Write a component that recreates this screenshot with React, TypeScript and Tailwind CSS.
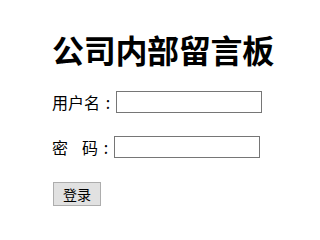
export default function App() {
  return (
    <div
      className="min-h-screen bg-white text-black pl-[52px] pt-[33px]"
      style={{ fontFamily: '"Noto Sans CJK SC", "Noto Sans", sans-serif' }}
    >
      <h1 className="text-[32px] leading-[32px] font-bold tracking-[-0.3px]">公司内部留言板</h1>

      <form className="mt-[26px] flex flex-col items-start" onSubmit={(e) => e.preventDefault()}>
        <label className="flex items-center h-[22px] text-[16px] leading-[16px]">
          <span>用户名</span>
          <span className="w-[16px] text-center">:</span>
          <input type="text" className="w-[146px] h-[22px] border border-[#767676] bg-white outline-none" />
        </label>

        <label className="mt-[23px] flex items-center h-[22px] text-[16px] leading-[16px]">
          <span className="mr-[14px]">密</span>
          <span>码</span>
          <span className="w-[16px] text-center">:</span>
          <input type="password" className="w-[146px] h-[22px] border border-[#767676] bg-white outline-none" />
        </label>

        <button
          type="submit"
          className="mt-[24px] ml-[1px] w-[48px] h-[24px] border border-[#adadad] bg-[#e1e1e1] text-[14px] leading-[14px] text-black"
        >
          登录
        </button>
      </form>
    </div>
  );
}
